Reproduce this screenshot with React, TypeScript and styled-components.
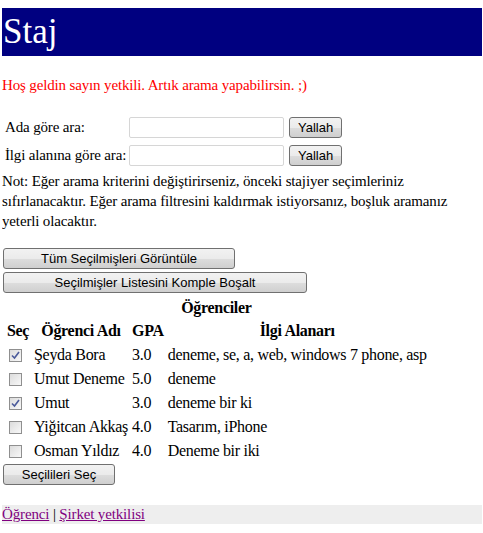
import styled, { createGlobalStyle } from 'styled-components';

const GlobalStyle = createGlobalStyle`
  body {
    margin: 8px 1px 0 2px;
    font-family: "Liberation Serif", "Times New Roman", serif;
    font-size: 15px;
    letter-spacing: -0.15px;
    color: #000;
    background: #fff;
  }
`;

const Page = styled.div`
  display: flex;
  flex-direction: column;
`;

const Header = styled.div`
  background: #000080;
  height: 48px;
  display: flex;
  align-items: center;
  padding-left: 1px;
`;

const Title = styled.h1`
  margin: 0;
  font-family: "Liberation Serif", "Times New Roman", serif;
  font-size: 35px;
  font-weight: 400;
  letter-spacing: 0;
  color: #fff;
  line-height: 40px;
`;

const Welcome = styled.p`
  margin: 20px 0 0 0;
  color: #ff0000;
  line-height: 19px;
`;

const SearchGrid = styled.div`
  display: grid;
  grid-template-columns: 122px 155px auto;
  column-gap: 2px;
  row-gap: 7px;
  align-items: center;
  margin: 22px 0 0 3px;
  justify-content: start;
`;

const Label = styled.span`
  line-height: 21px;
  white-space: nowrap;
`;

const TextInput = styled.input`
  box-sizing: border-box;
  width: 155px;
  height: 21px;
  border: 1px solid #d6d6d6;
  border-radius: 2px;
  padding: 1px 3px;
  font-size: 13px;
  background: #fff;
`;

const Button = styled.button<{ $w?: number; $gap?: number }>`
  box-sizing: border-box;
  height: 21px;
  width: ${(p) => (p.$w ? `${p.$w}px` : 'auto')};
  margin-left: ${(p) => p.$gap ?? 0}px;
  padding: 0 8px;
  border: 1px solid #707070;
  border-radius: 3px;
  background: linear-gradient(#f2f2f2 0%, #ebebeb 50%, #dddddd 51%, #cfcfcf 100%);
  font-family: "Liberation Sans", Arial, sans-serif;
  font-size: 13px;
  letter-spacing: 0;
  color: #000;
  line-height: 17px;
`;

const Note = styled.p`
  margin: 5px 0 0 0;
  line-height: 20px;
`;

const ActionStack = styled.div<{ $top: number }>`
  display: flex;
  flex-direction: column;
  align-items: flex-start;
  gap: 3px;
  margin: ${(p) => p.$top}px 0 0 1px;
`;

const Table = styled.table`
  border-collapse: separate;
  border-spacing: 2px;
  margin: 5px 0 0 1px;
  align-self: flex-start;
  font-size: 16px;
  letter-spacing: -0.3px;
`;

const Caption = styled.caption`
  font-weight: 700;
  line-height: 20px;
  text-align: center;
`;

const Th = styled.th`
  text-align: center;
  font-weight: 700;
  height: 22px;
  padding: 0 1px;
  white-space: nowrap;
`;

const Td = styled.td`
  height: 22px;
  padding: 0 1px;
  white-space: nowrap;
  vertical-align: middle;
`;

const CheckCell = styled.td`
  height: 22px;
  padding: 0 0 0 4px;
  width: 22px;
  vertical-align: middle;
`;

const Box = styled.span`
  display: block;
  box-sizing: border-box;
  width: 13px;
  height: 13px;
  border: 1px solid #8f8f8f;
  background: linear-gradient(135deg, #dcdcdc, #f8f8f8);
  position: relative;
`;

const Tick = styled.svg`
  position: absolute;
  left: 1px;
  top: 1px;
`;

const Footer = styled.div`
  margin-top: 20px;
  background: #eeeeee;
  height: 19px;
  line-height: 18px;
`;

const Link = styled.a`
  color: #800080;
  text-decoration: underline;
`;

const Sep = styled.span`
  color: #000;
`;

type Student = { name: string; gpa: string; interests: string; checked: boolean };

const students: Student[] = [
  { name: 'Şeyda Bora', gpa: '3.0', interests: 'deneme, se, a, web, windows 7 phone, asp', checked: true },
  { name: 'Umut Deneme', gpa: '5.0', interests: 'deneme', checked: false },
  { name: 'Umut', gpa: '3.0', interests: 'deneme bir ki', checked: true },
  { name: 'Yiğitcan Akkaş', gpa: '4.0', interests: 'Tasarım, iPhone', checked: false },
  { name: 'Osman Yıldız', gpa: '4.0', interests: 'Deneme bir iki', checked: false },
];

const Checkbox = ({ checked }: { checked: boolean }) => (
  <Box>
    {checked && (
      <Tick width="9" height="9" viewBox="0 0 9 9">
        <path d="M1 4.5 L3.5 7 L8 1" stroke="#4a5a9a" strokeWidth="1.6" fill="none" />
      </Tick>
    )}
  </Box>
);

const App = () => {
  return (
    <Page>
      <GlobalStyle />
      <Header>
        <Title>Staj</Title>
      </Header>
      <Welcome>Hoş geldin sayın yetkili. Artık arama yapabilirsin. ;)</Welcome>
      <SearchGrid>
        <Label>Ada göre ara:</Label>
        <TextInput type="text" />
        <Button $gap={3}>Yallah</Button>
        <Label>İlgi alanına göre ara:</Label>
        <TextInput type="text" />
        <Button $gap={3}>Yallah</Button>
      </SearchGrid>
      <Note>
        Not: Eğer arama kriterini değiştirirseniz, önceki stajiyer seçimleriniz sıfırlanacaktır. Eğer arama
        filtresini kaldırmak istiyorsanız, boşluk aramanız yeterli olacaktır.
      </Note>
      <ActionStack $top={17}>
        <Button $w={232}>Tüm Seçilmişleri Görüntüle</Button>
        <Button $w={304}>Seçilmişler Listesini Komple Boşalt</Button>
      </ActionStack>
      <Table>
        <Caption>Öğrenciler</Caption>
        <thead>
          <tr>
            <Th>Seç</Th>
            <Th>Öğrenci Adı</Th>
            <Th>GPA</Th>
            <Th>İlgi Alanarı</Th>
          </tr>
        </thead>
        <tbody>
          {students.map((s) => (
            <tr key={s.name}>
              <CheckCell>
                <Checkbox checked={s.checked} />
              </CheckCell>
              <Td>{s.name}</Td>
              <Td>{s.gpa}</Td>
              <Td>{s.interests}</Td>
            </tr>
          ))}
        </tbody>
      </Table>
      <ActionStack $top={0}>
        <Button $w={112}>Seçilileri Seç</Button>
      </ActionStack>
      <Footer>
        <Link href="#">Öğrenci</Link> <Sep>|</Sep> <Link href="#">Şirket yetkilisi</Link>
      </Footer>
    </Page>
  );
};

export default App;
